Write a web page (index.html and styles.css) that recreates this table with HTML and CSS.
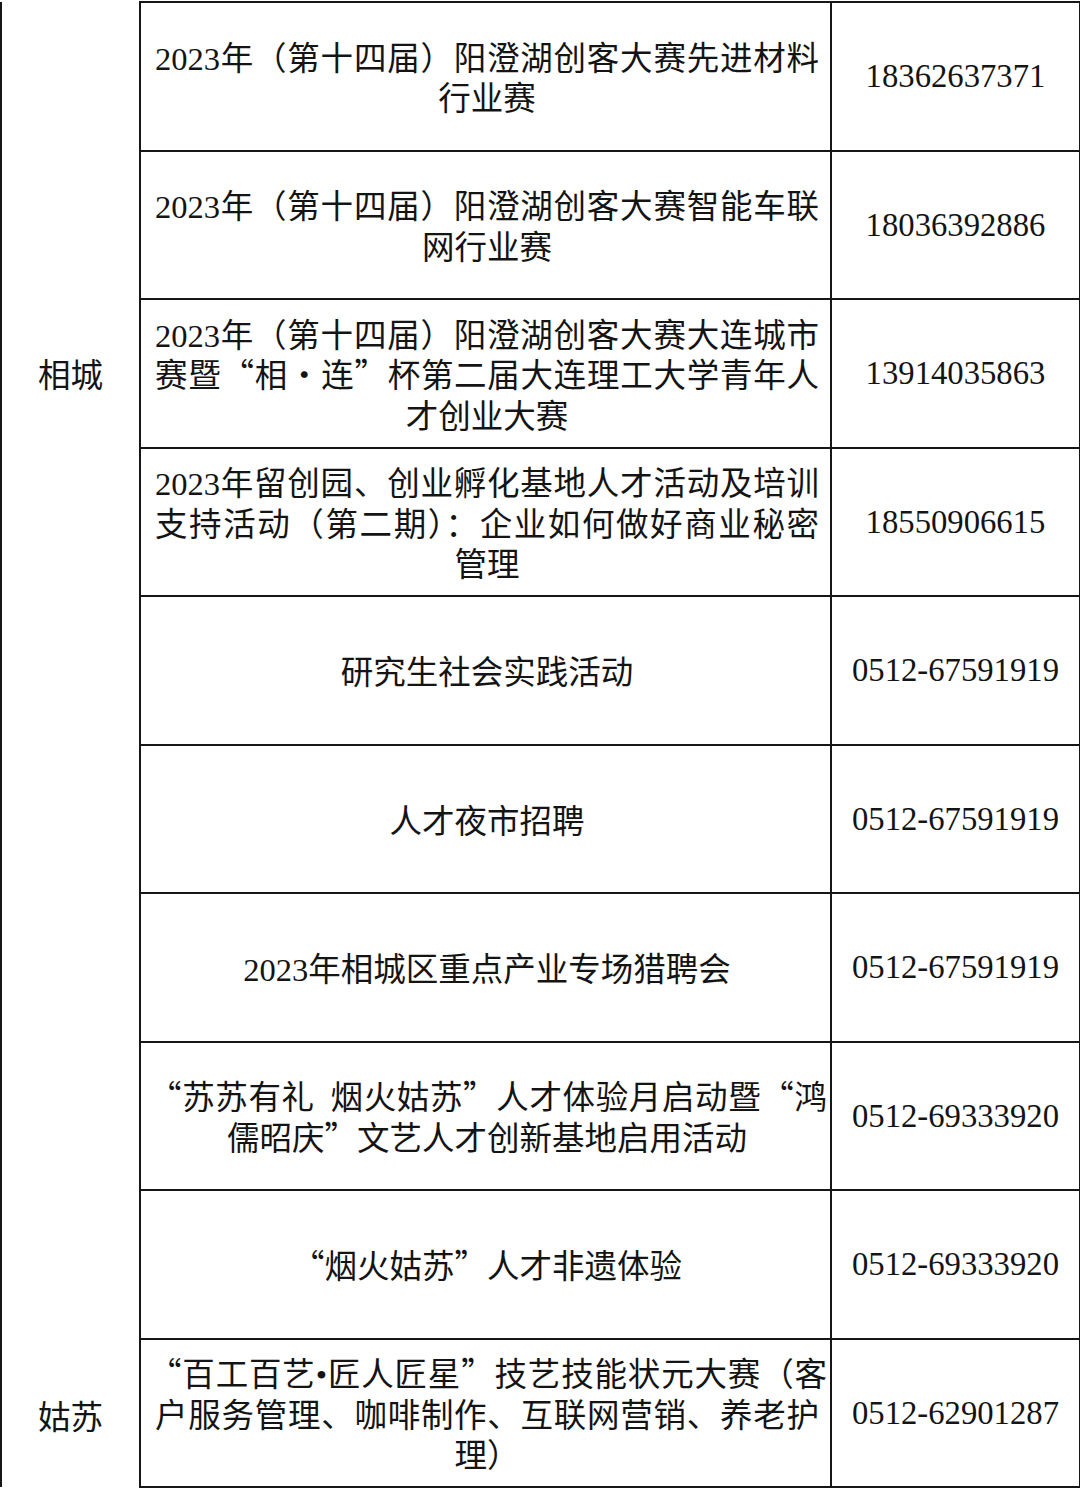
FILE: index.html
```html
<!DOCTYPE html>
<html lang="zh-CN">
<head>
<meta charset="utf-8">
<title>活动表</title>
<link rel="stylesheet" href="styles.css">
</head>
<body>
<table class="tbl">
  <colgroup>
    <col class="c-area">
    <col class="c-name">
    <col class="c-tel">
  </colgroup>
  <tbody>
    <tr>
      <td class="area area-top" rowspan="7"><span class="area-txt">相城</span></td>
      <td class="name"><span class="ln j"><span class="num">2023</span>年（第十四届）阳澄湖创客大赛先进材料</span><span class="ln">行业赛</span></td>
      <td class="tel">18362637371</td>
    </tr>
    <tr>
      <td class="name"><span class="ln j"><span class="num">2023</span>年（第十四届）阳澄湖创客大赛智能车联</span><span class="ln">网行业赛</span></td>
      <td class="tel">18036392886</td>
    </tr>
    <tr>
      <td class="name"><span class="ln j"><span class="num">2023</span>年（第十四届）阳澄湖创客大赛大连城市</span><span class="ln j">赛暨“相・连”杯第二届大连理工大学青年人</span><span class="ln">才创业大赛</span></td>
      <td class="tel">13914035863</td>
    </tr>
    <tr>
      <td class="name"><span class="ln j"><span class="num">2023</span>年留创园、创业孵化基地人才活动及培训</span><span class="ln j">支持活动（第二期）：企业如何做好商业秘密</span><span class="ln">管理</span></td>
      <td class="tel">18550906615</td>
    </tr>
    <tr>
      <td class="name"><span class="ln">研究生社会实践活动</span></td>
      <td class="tel">0512-67591919</td>
    </tr>
    <tr>
      <td class="name"><span class="ln">人才夜市招聘</span></td>
      <td class="tel">0512-67591919</td>
    </tr>
    <tr>
      <td class="name"><span class="ln"><span class="num">2023</span>年相城区重点产业专场猎聘会</span></td>
      <td class="tel">0512-67591919</td>
    </tr>
    <tr>
      <td class="area area-bottom" rowspan="3"><span class="area-txt">姑苏</span></td>
      <td class="name"><span class="ln wide">“苏苏有礼&nbsp;&nbsp;烟火姑苏”人才体验月启动暨“鸿</span><span class="ln">儒昭庆”文艺人才创新基地启用活动</span></td>
      <td class="tel">0512-69333920</td>
    </tr>
    <tr>
      <td class="name"><span class="ln">“烟火姑苏”人才非遗体验</span></td>
      <td class="tel">0512-69333920</td>
    </tr>
    <tr>
      <td class="name"><span class="ln wide">“百工百艺<span class="dot">•</span>匠人匠星”技艺技能状元大赛（客</span><span class="ln j">户服务管理、咖啡制作、互联网营销、养老护</span><span class="ln">理）</span></td>
      <td class="tel">0512-62901287</td>
    </tr>
  </tbody>
</table>
</body>
</html>
```

FILE: styles.css
```css
html, body {
  margin: 0;
  padding: 0;
  background: #ffffff;
}

body {
  width: 1080px;
  height: 1488px;
  overflow: hidden;
  color: #141414;
  font-family: "Noto Sans CJK SC", "Liberation Serif", sans-serif;
  font-size: 32.5px;
  line-height: 40.5px;
}

.tbl {
  border-collapse: collapse;
  table-layout: fixed;
  width: 1079px;
  margin: 1px 0 0 0;
}

.c-area { width: 139px; }
.c-name { width: 691px; }
.c-tel { width: 249px; }

.tbl td {
  border: 2px solid #161616;
  padding: 0;
  height: 146.5px;
  text-align: center;
  vertical-align: middle;
}

.tbl td.area {
  height: auto;
  vertical-align: top;
  border-top: none;
  border-bottom: none;
  padding-top: 351px;
}

.tbl td.area-bottom {
  padding-top: 353px;
}

.area-txt {
  display: block;
  text-align: center;
}

.tbl td.name {
  padding: 0 11px 0 14px;
}

.ln {
  display: block;
  height: 40.5px;
  white-space: nowrap;
  text-align: center;
}

.ln.j {
  text-align: justify;
  text-align-last: justify;
}

.ln.wide {
  margin: 0 -8px 0 -6px;
  text-align: justify;
  text-align-last: justify;
}

.num,
.dot {
  font-family: "Liberation Serif", serif;
  line-height: 0;
}

.tbl td.tel {
  font-family: "Liberation Serif", "Noto Sans CJK SC", serif;
  font-size: 32.7px;
}
```
